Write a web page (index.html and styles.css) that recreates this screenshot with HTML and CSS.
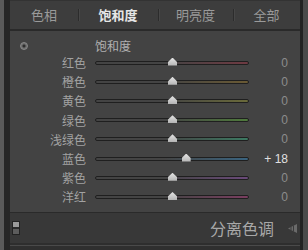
FILE: index.html
```html
<!DOCTYPE html>
<html lang="zh">
<head>
    <meta charset="UTF-8">
    <title>HSL 饱和度</title>
    <link rel="stylesheet" href="styles.css">
</head>
<body>
    <div class="app">
        <div class="frame">
            <div class="tabs">
                <div class="tab">色相</div>
                <div class="tab active">饱和度</div>
                <div class="tab">明亮度</div>
                <div class="tab">全部</div>
            </div>

            <div class="panel">
                <div class="panel-head">
                    <span class="target"></span>
                    <span class="title">饱和度</span>
                </div>
                <div class="row"><span class="label">红色</span><div class="track red"><span class="thumb" style="left: 50%"></span></div><span class="value">0</span></div>
                <div class="row"><span class="label">橙色</span><div class="track orange"><span class="thumb" style="left: 50%"></span></div><span class="value">0</span></div>
                <div class="row"><span class="label">黄色</span><div class="track yellow"><span class="thumb" style="left: 50%"></span></div><span class="value">0</span></div>
                <div class="row"><span class="label">绿色</span><div class="track green"><span class="thumb" style="left: 50%"></span></div><span class="value">0</span></div>
                <div class="row"><span class="label">浅绿色</span><div class="track aqua"><span class="thumb" style="left: 50%"></span></div><span class="value">0</span></div>
                <div class="row"><span class="label">蓝色</span><div class="track blue"><span class="thumb" style="left: 59%"></span></div><span class="value changed">+ 18</span></div>
                <div class="row"><span class="label">紫色</span><div class="track purple"><span class="thumb" style="left: 50%"></span></div><span class="value">0</span></div>
                <div class="row"><span class="label">洋红</span><div class="track magenta"><span class="thumb" style="left: 50%"></span></div><span class="value">0</span></div>
            </div>

            <div class="footer">
                <span class="toggle"></span>
                <span class="footer-title">分离色调</span>
                <svg class="collapse" width="9" height="9" viewBox="0 0 9 9">
                    <polygon points="9,0 9,9 0,4.5" fill="#6a6a6a"/>
                    <line x1="3" y1="3" x2="3" y2="6" stroke="#3a3a3a" stroke-width="1"/>
                    <line x1="5.5" y1="1.5" x2="5.5" y2="7.5" stroke="#3a3a3a" stroke-width="1"/>
                </svg>
            </div>
            <div class="bottom"></div>
        </div>
    </div>
</body>
</html>
```

FILE: styles.css
```css
body {
    margin: 0;
    background-color: #3c3c3c;
    font-family: "Noto Sans CJK SC", "Noto Sans", sans-serif;
}

.app {
    width: 299px;
    height: 250px;
    border-left: 4px solid #5a5a5a;
    border-right: 5px solid #4a4a4a;
    background-color: #3c3c3c;
}

.frame {
    height: 250px;
    border-left: 6px solid #262626;
    border-right: 3px solid #222;
    display: flex;
    flex-direction: column;
}

/* tabs */
.tabs {
    height: 28px;
    display: grid;
    grid-template-columns: 68px 80px 75px 1fr;
    align-items: center;
    border-top: 1px solid #333;
    border-bottom: 2px solid #2a2a2a;
    background-color: #3d3d3d;
}

.tab {
    position: relative;
    text-align: center;
    font-size: 13px;
    line-height: 18px;
    color: #9a9a9a;
}

.tab + .tab::before {
    content: "";
    position: absolute;
    left: 0;
    top: 3px;
    height: 12px;
    border-left: 1px solid #2c2c2c;
    border-right: 1px solid #474747;
}

.tab.active {
    color: #e6e6e6;
    font-weight: bold;
}

/* saturation panel */
.panel {
    height: 181px;
    box-sizing: border-box;
    padding-top: 7px;
    background-color: #434343;
}

.panel-head {
    height: 15px;
    display: flex;
    align-items: center;
}

.target {
    width: 6px;
    height: 6px;
    margin-left: 10px;
    border: 1px solid #8a8a8a;
    border-radius: 50%;
    background: radial-gradient(circle, #2e2e2e 0 1px, #6c6c6c 2px);
}

.title {
    margin-left: 67px;
    font-size: 12px;
    color: #b0b0b0;
}

.row {
    height: 19.2px;
    display: flex;
    align-items: center;
}

.label {
    width: 76px;
    text-align: right;
    font-size: 12px;
    color: #a2a2a2;
}

.track {
    position: relative;
    width: 152px;
    height: 2px;
    margin-left: 9px;
    border: 1px solid #1f1f1f;
    border-radius: 2px;
}

.thumb {
    position: absolute;
    top: -4px;
    width: 9px;
    height: 8px;
    margin-left: -4px;
    background: linear-gradient(#e4e4e4, #b4b4b4);
    clip-path: polygon(50% 0, 100% 55%, 100% 100%, 0 100%, 0 55%);
}

.value {
    width: 39px;
    text-align: right;
    font-family: "Liberation Sans", sans-serif;
    font-size: 12px;
    color: #8c8c8c;
}

.value.changed {
    color: #e0e0e0;
}

.red { background: linear-gradient(to right, #444 45%, #6e3a42); }
.orange { background: linear-gradient(to right, #444 45%, #6a5a34); }
.yellow { background: linear-gradient(to right, #444 45%, #6a6a3a); }
.green { background: linear-gradient(to right, #444 45%, #4f7a3c); }
.aqua { background: linear-gradient(to right, #444 45%, #3c7a62); }
.blue { background: linear-gradient(to right, #444 45%, #3a6480); }
.purple { background: linear-gradient(to right, #444 45%, #6a4a7a); }
.magenta { background: linear-gradient(to right, #444 45%, #7a3e60); }

/* split toning header */
.footer {
    height: 30px;
    display: flex;
    align-items: center;
    border-top: 1px solid #2a2a2a;
    background-color: #383838;
}

.toggle {
    width: 6px;
    height: 12px;
    margin-left: 2px;
    border: 1px solid #222;
    background: linear-gradient(#9a9a9a 0 45%, #2a2a2a 45% 55%, #5c5c5c 55%);
}

.footer-title {
    margin-left: auto;
    font-size: 16px;
    color: #a8a8a8;
}

.collapse {
    margin: 0 3px 0 14px;
}

.bottom {
    flex: 1;
    border-top: 2px solid #2e2e2e;
    background-color: #2f2f2f;
    box-shadow: inset 0 1px 0 #4a4a4a;
}
```
